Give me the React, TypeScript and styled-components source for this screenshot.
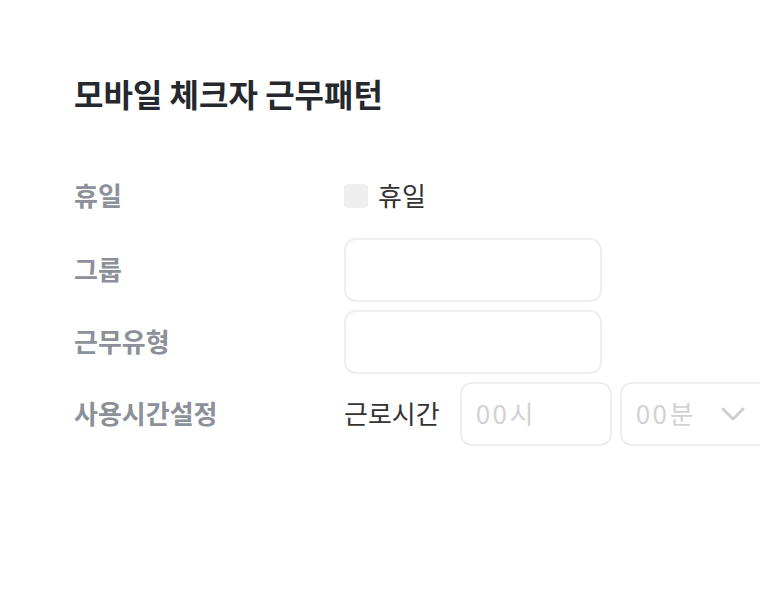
import React from 'react'
import styled, { createGlobalStyle } from 'styled-components'

const GlobalStyle = createGlobalStyle`
  html, body {
    margin: 0;
    padding: 0;
    background: #ffffff;
    overflow: hidden;
  }
  body {
    font-family: 'Noto Sans CJK KR', 'Noto Sans', sans-serif;
  }
`

const Page = styled.div`
  width: 760px;
  height: 600px;
  padding: 71px 0 0 74px;
  box-sizing: border-box;
  overflow: hidden;
`

const Title = styled.h1`
  margin: 0 0 47px 0;
  font-size: 32px;
  line-height: 44px;
  font-weight: 700;
  color: #25282d;
`

const Form = styled.div`
  display: flex;
  flex-direction: column;
  gap: 8px;
`

const Row = styled.div<{ $height: number }>`
  display: grid;
  grid-template-columns: 270px auto;
  align-items: center;
  height: ${p => p.$height}px;
`

const Label = styled.div`
  font-size: 26px;
  font-weight: 700;
  color: #8b9099;
  padding-bottom: 4px;
`

const Field = styled.div`
  display: flex;
  align-items: center;
  white-space: nowrap;
`

const CheckBox = styled.span`
  width: 24px;
  height: 24px;
  border-radius: 4px;
  background: #eeeeee;
  margin-right: 10px;
`

const Text = styled.span`
  font-size: 26px;
  color: #333333;
  padding-bottom: 4px;
`

const Input = styled.div<{ $width: number }>`
  width: ${p => p.$width}px;
  height: 64px;
  box-sizing: border-box;
  border: 2px solid #eeeeee;
  border-radius: 12px;
  display: flex;
  align-items: center;
  padding: 0 12px 0 14px;
  flex-shrink: 0;
`

const Placeholder = styled.span`
  font-size: 26px;
  color: #d2d2d2;
  letter-spacing: 2.5px;
  padding-bottom: 4px;
`

const TimeLabel = styled(Text)`
  margin-right: 20px;
`

const Gap = styled.span`
  width: 8px;
  flex-shrink: 0;
`

const ChevronIcon = styled.svg`
  margin-left: 24px;
  flex-shrink: 0;
`

const Chevron = () => (
  <ChevronIcon width="26" height="16" viewBox="0 0 26 16" fill="none" stroke="#cfcfcf" strokeWidth="3" strokeLinecap="round" strokeLinejoin="round">
    <polyline points="3 3 13 13 23 3" />
  </ChevronIcon>
)

export default function App() {
  return (
    <Page>
      <GlobalStyle />
      <Title>모바일 체크자 근무패턴</Title>
      <Form>
        <Row $height={68}>
          <Label>휴일</Label>
          <Field>
            <CheckBox />
            <Text>휴일</Text>
          </Field>
        </Row>
        <Row $height={64}>
          <Label>그룹</Label>
          <Field>
            <Input $width={258} />
          </Field>
        </Row>
        <Row $height={64}>
          <Label>근무유형</Label>
          <Field>
            <Input $width={258} />
          </Field>
        </Row>
        <Row $height={64}>
          <Label>사용시간설정</Label>
          <Field>
            <TimeLabel>근로시간</TimeLabel>
            <Input $width={152}>
              <Placeholder>00시</Placeholder>
            </Input>
            <Gap />
            <Input $width={170}>
              <Placeholder>00분</Placeholder>
              <Chevron />
            </Input>
          </Field>
        </Row>
      </Form>
    </Page>
  )
}
